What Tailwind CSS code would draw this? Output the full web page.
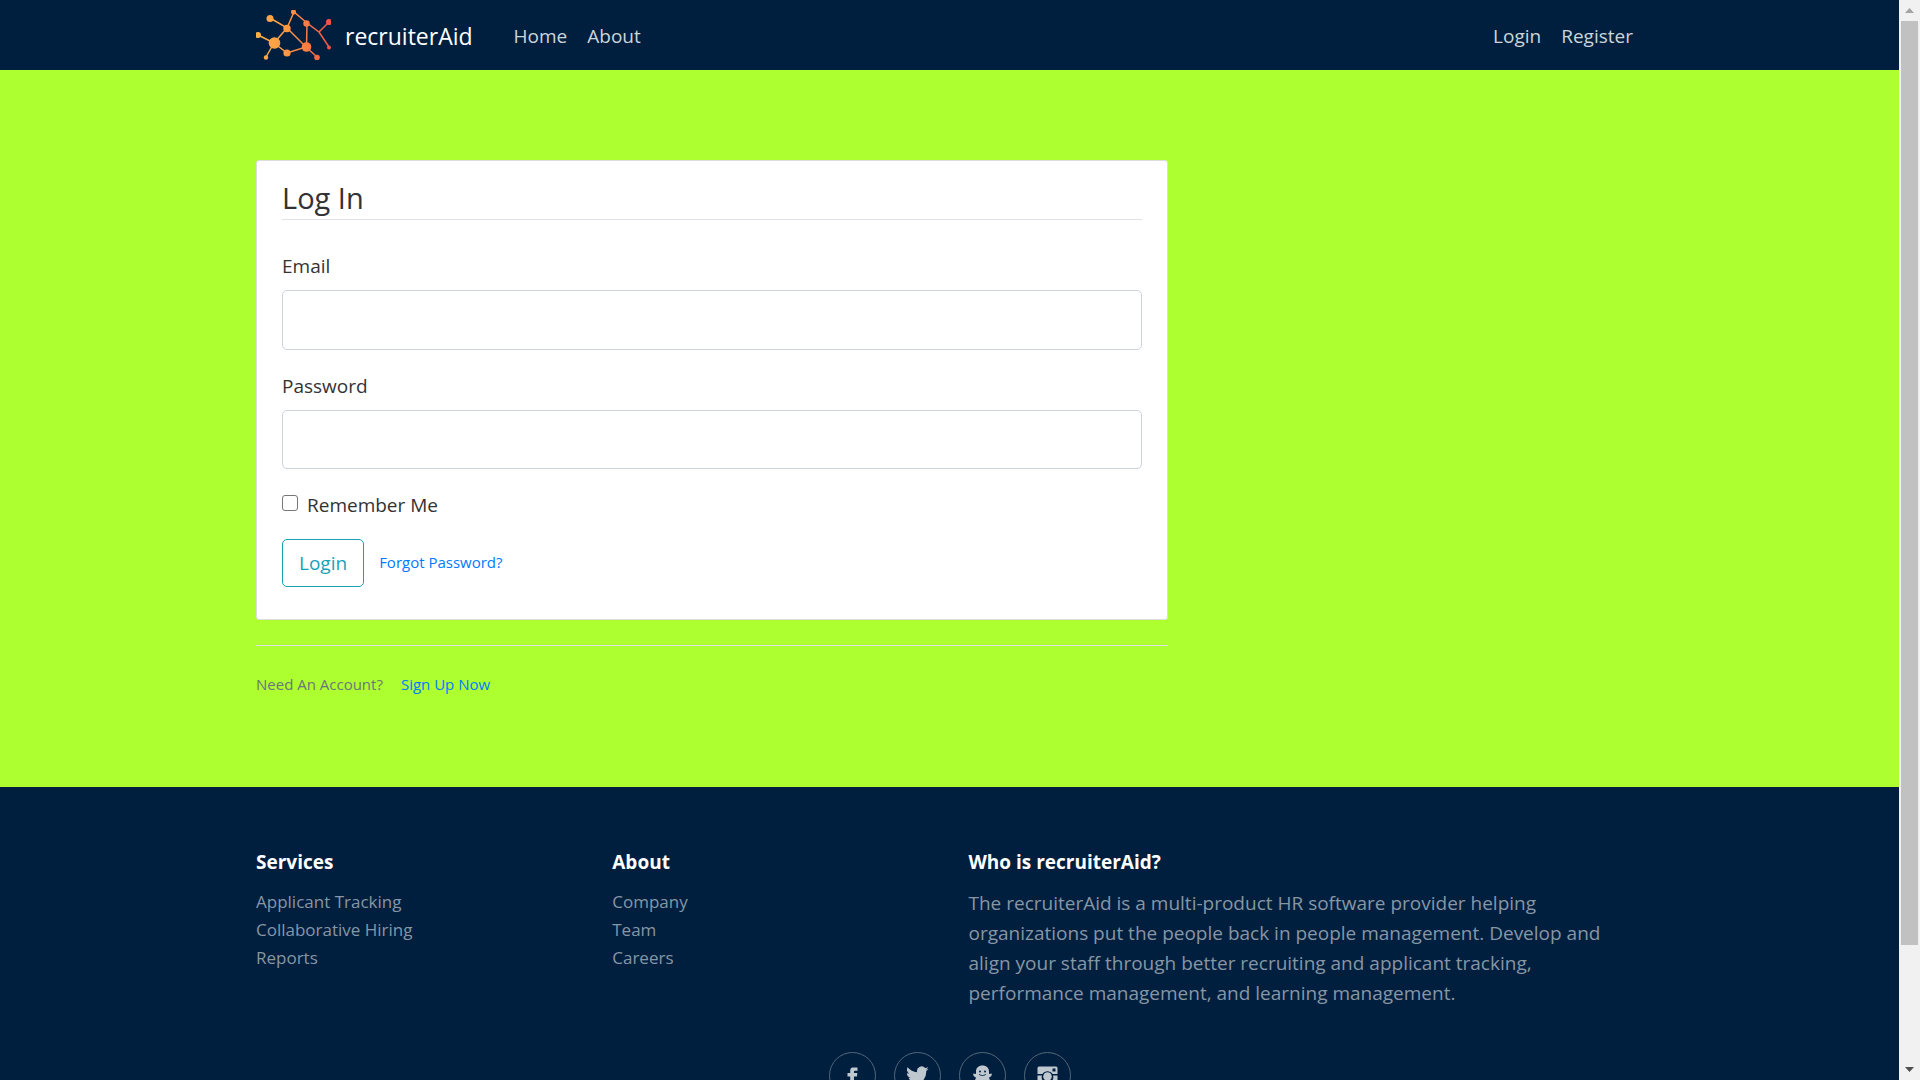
<!DOCTYPE html>
<html lang="en">
<head>
<meta charset="utf-8">
<meta name="viewport" content="width=device-width, initial-scale=1">
<title>recruiterAid - Log In</title>
<script src="https://cdn.jsdelivr.net/npm/@tailwindcss/browser@4"></script>
</head>
<body class="flex h-screen overflow-hidden bg-[#001f3f] font-['Open_Sans','Noto_Sans',sans-serif] text-[19px] leading-[30px] text-[#333333]">
<div class="min-w-0 flex-1 overflow-y-auto [scrollbar-width:none]">

  <header class="bg-[#001f3f]">
    <nav class="mx-auto flex h-[70px] max-w-[1425px] items-center px-[19px]" aria-label="Main">
      <a href="#" class="flex items-center gap-[14px] text-[23px] text-white">
        <svg class="h-[50px] w-[75px]" viewBox="0 0 75 50" aria-hidden="true">
          <defs>
            <linearGradient id="brand" gradientUnits="userSpaceOnUse" x1="0" y1="0" x2="75" y2="0">
              <stop offset="0" stop-color="#fdb044"/><stop offset="0.35" stop-color="#fd9d45"/><stop offset="0.7" stop-color="#fa7a46"/><stop offset="1" stop-color="#f04f48"/>
            </linearGradient>
          </defs>
          <g stroke="url(#brand)" stroke-width="1.5" fill="none">
            <path d="M14 8 31 18 38 2 51 13 63 22 73 12M63 22 73 37M51 13.500 50.500 37M31 18 50 37 61 47M31 18 18 33 2 25M18 33 10 47M18 33 31 43 50 37"/>
          </g>
          <g fill="url(#brand)">
            <circle cx="14" cy="8.500" r="3.500"/><circle cx="31" cy="18.500" r="3.700"/><circle cx="37.500" cy="2" r="2.500"/><circle cx="50.500" cy="13.500" r="3.200"/><circle cx="73" cy="12" r="3"/><circle cx="73" cy="37.500" r="2"/><circle cx="50.500" cy="37" r="4.800"/><circle cx="61" cy="47.500" r="2.800"/><circle cx="2" cy="25" r="3"/><circle cx="18.500" cy="33" r="5.800"/><circle cx="10" cy="47.500" r="2.200"/><circle cx="31" cy="43" r="3.600"/>
          </g>
        </svg>
        <span class="pt-[2px]">recruiterAid</span>
      </a>
      <div class="ml-[41px] flex flex-1 gap-5 pt-[2px] text-[#cbd5db]">
        <a href="#">Home</a>
        <a href="#">About</a>
        <a href="#" class="ml-auto">Login</a>
        <a href="#" class="mr-[10px]">Register</a>
      </div>
    </nav>
  </header>

  <main class="bg-[#adff2f]">
    <div class="mx-auto max-w-[1425px] px-[19px] pt-[90px] pb-[88px]">
      <div class="w-full max-w-[912px]">
        <section class="rounded-[3px] border border-[#dddddd] bg-white px-[25px] pt-[18px] pb-8">
          <form>
            <h1 class="border-b border-[#dee2e6] pb-[2px] text-[29px] leading-[38px]">Log In</h1>
            <label for="email" class="mt-[31px] block">Email</label>
            <input id="email" type="email" class="mt-[9px] block h-[60px] w-full rounded-[5px] border border-[#ced4da] bg-white px-4">
            <label for="password" class="mt-[21px] block">Password</label>
            <input id="password" type="password" class="mt-[9px] block h-[59px] w-full rounded-[5px] border border-[#ced4da] bg-white px-4">
            <div class="mt-[21px] flex items-start gap-[9px]">
              <input id="remember" type="checkbox" class="mt-[5px] size-4 appearance-none rounded-[3px] border border-[#767676] bg-white checked:bg-[#0075ff]">
              <label for="remember">Remember Me</label>
            </div>
            <div class="mt-[19px] flex items-center gap-[15px]">
              <button type="button" class="h-12 rounded-[5px] border border-[#17a2b8] px-4 text-[#17a2b8]">Login</button>
              <a href="#" class="pb-[2px] text-[15px] text-[#007bff]">Forgot Password?</a>
            </div>
          </form>
        </section>
        <div class="mt-[25px] flex gap-[18px] border-t border-[#dee2e6] pt-[23px] text-[15px]">
          <span class="text-[#6c757d]">Need An Account?</span>
          <a href="#" class="text-[#007bff]">Sign Up Now</a>
        </div>
      </div>
    </div>
  </main>

  <footer class="bg-[#001f3f] pt-[60px] pb-[110px] text-[#8796a5]">
    <div class="mx-auto max-w-[1425px] px-[19px]">
      <div class="grid grid-cols-4 gap-x-[38px]">
        <section>
          <h2 class="mb-[11px] font-bold text-white">Services</h2>
          <ul class="text-[17px] leading-7">
            <li><a href="#">Applicant Tracking</a></li>
            <li><a href="#">Collaborative Hiring</a></li>
            <li><a href="#">Reports</a></li>
          </ul>
        </section>
        <section>
          <h2 class="mb-[11px] font-bold text-white">About</h2>
          <ul class="text-[17px] leading-7">
            <li><a href="#">Company</a></li>
            <li><a href="#">Team</a></li>
            <li><a href="#">Careers</a></li>
          </ul>
        </section>
        <section class="col-span-2">
          <h2 class="mb-[11px] font-bold text-white">Who is recruiterAid?</h2>
          <p>The recruiterAid is a multi-product HR software provider helping organizations put the people back in people management. Develop and align your staff through better recruiting and applicant tracking, performance management, and learning management.</p>
        </section>
      </div>
      <div class="mt-11 flex justify-center gap-[18px] text-[#bfc7cf]">
        <a href="#" aria-label="Facebook" class="grid size-[47px] place-items-center rounded-full border border-[#526679]">
          <svg class="size-[23px]" viewBox="0 0 23 23" fill="currentColor"><path d="M9.200 22V12.500H6.500V9H9.200V6.500C9.200 4 10.800 3.500 12.500 3.500H16.500V6.800H14C13.200 6.800 13 7.200 13 7.800V9H16.300L16 12.500H13V22Z"/></svg>
        </a>
        <a href="#" aria-label="Twitter" class="grid size-[47px] place-items-center rounded-full border border-[#526679]">
          <svg class="size-[23px]" viewBox="0 0 24 24" fill="currentColor"><path d="M23.600 4.900a9.600 9.600 0 0 1-2.700.8 4.800 4.800 0 0 0 2.100-2.700 9.700 9.700 0 0 1-3 1.200 4.800 4.800 0 0 0-8.300 4.400A13.700 13.700 0 0 1 1.700 3.500a4.800 4.800 0 0 0 1.500 6.500 4.800 4.800 0 0 1-2.200-.6 4.800 4.800 0 0 0 3.900 4.800 4.800 4.800 0 0 1-2.200.1 4.800 4.800 0 0 0 4.500 3.400A9.700 9.700 0 0 1 0 19.600a13.700 13.700 0 0 0 21.100-12.200 9.800 9.800 0 0 0 2.500-2.500Z"/></svg>
        </a>
        <a href="#" aria-label="Snapchat" class="grid size-[47px] place-items-center rounded-full border border-[#526679]">
          <svg class="size-[23px]" viewBox="0 0 23 23"><path fill="currentColor" d="M11.500 1.500C7.500 1.500 5 4 5 7.500V10L2.500 9.500C1.500 11 3 12.500 5 13.500 4.500 16 3 17 2 18L6 19.500C8 19.500 9 21.500 11.500 21.500S15 19.500 17 19.500L21 18C20 17 18.500 16 18 13.500 20 12.500 21.500 11 20.500 9.500L18 10V7.500C18 4 15.500 1.500 11.500 1.500Z"/><circle cx="9" cy="7.500" r="1" fill="#001f3f"/><circle cx="14" cy="7.500" r="1" fill="#001f3f"/><path d="M8 10C9.500 12 13.500 12 15 10" fill="none" stroke="#001f3f"/></svg>
        </a>
        <a href="#" aria-label="Instagram" class="grid size-[47px] place-items-center rounded-full border border-[#526679]">
          <svg class="size-[23px]" viewBox="0 0 23 23"><path fill="currentColor" d="M3 2.500H20Q21.500 2.500 21.500 4V10H16.500A6 6 0 0 0 6.500 10H1.500V4Q1.500 2.500 3 2.500ZM1.500 11.500H6A5.800 5.800 0 1 0 17 11.500H21.500V20Q21.500 21.500 20 21.500H3Q1.500 21.500 1.500 20Z"/><circle cx="11.500" cy="12.500" r="4.300" fill="currentColor"/><rect x="16.500" y="4.500" width="3" height="3" fill="#001f3f"/></svg>
        </a>
      </div>
    </div>
  </footer>
</div>

<div class="flex w-[21px] shrink-0 flex-col items-center bg-[#f1f1f1]" aria-hidden="true">
  <div class="grid h-[21px] place-items-center"><svg class="h-[5px] w-[9px]" viewBox="0 0 9 5"><path d="M0 5 4.500 0 9 5Z" fill="#a3a3a3"/></svg></div>
  <div class="min-h-0 w-full flex-1 px-[2px]"><div class="h-[89%] bg-[#c1c1c1]"></div></div>
  <div class="grid h-[21px] place-items-center"><svg class="h-[5px] w-[9px]" viewBox="0 0 9 5"><path d="M0 0H9L4.500 5Z" fill="#505050"/></svg></div>
</div>
</body>
</html>
